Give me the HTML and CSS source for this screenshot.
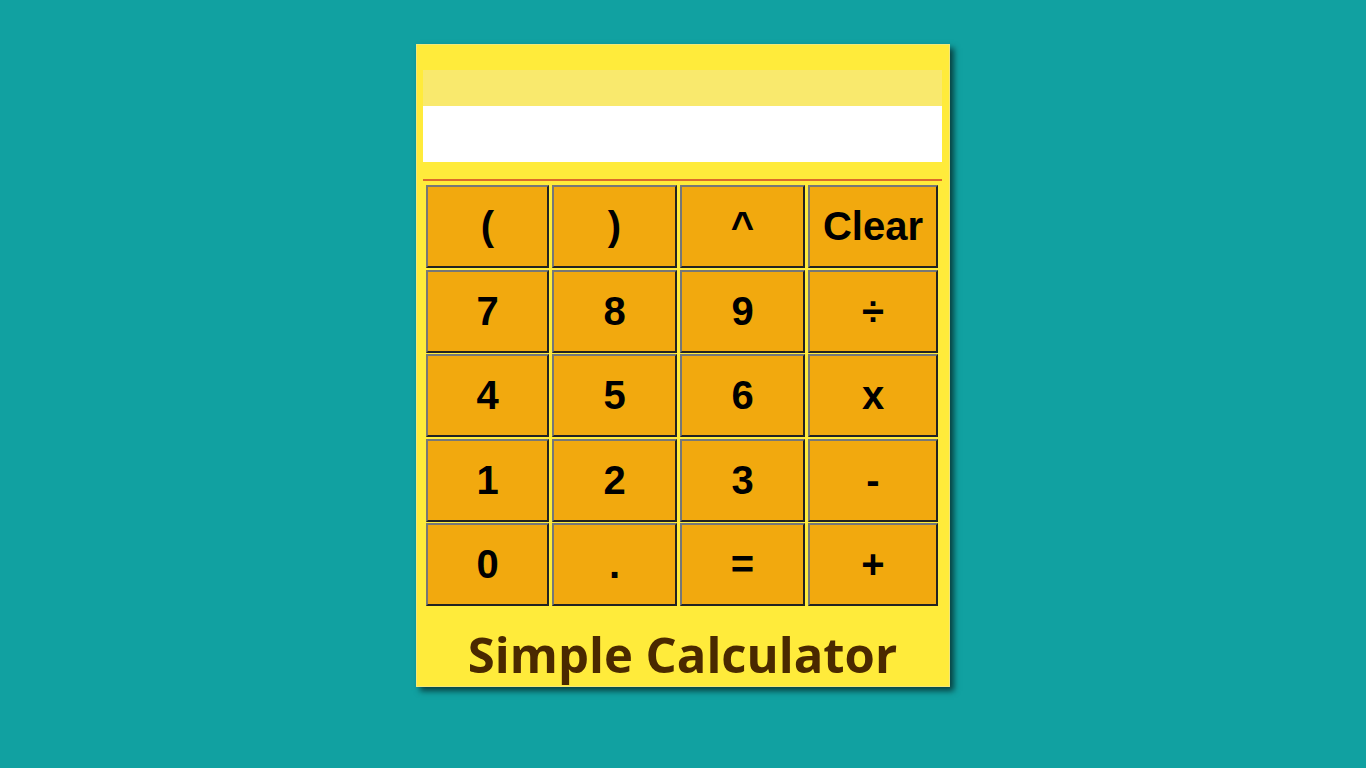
FILE: index.html
```html
<!DOCTYPE html>
<html lang="en">
<head>
<meta charset="utf-8">
<title>Simple Calculator</title>
<link rel="stylesheet" href="styles.css">
</head>
<body>
<div class="calc">
  <div class="display">
    <div class="expr"></div>
    <div class="result"></div>
  </div>
  <div class="divider"></div>
  <div class="keys">
    <button class="key">(</button>
    <button class="key">)</button>
    <button class="key">^</button>
    <button class="key">Clear</button>
    <button class="key">7</button>
    <button class="key">8</button>
    <button class="key">9</button>
    <button class="key">÷</button>
    <button class="key">4</button>
    <button class="key">5</button>
    <button class="key">6</button>
    <button class="key">x</button>
    <button class="key">1</button>
    <button class="key">2</button>
    <button class="key">3</button>
    <button class="key">-</button>
    <button class="key">0</button>
    <button class="key">.</button>
    <button class="key">=</button>
    <button class="key">+</button>
  </div>
  <div class="title">Simple Calculator</div>
</div>
</body>
</html>
```
FILE: styles.css
```css
html, body {
  margin: 0;
  padding: 0;
}
body {
  background: #11a1a1;
  height: 768px;
  overflow: hidden;
}
.calc {
  box-sizing: border-box;
  width: 534px;
  height: 643px;
  margin: 44px auto 0;
  background: #ffeb3b;
  border: 1px solid #f3e77a;
  box-shadow: 4px 4px 6px rgba(0, 0, 0, 0.6);
  padding: 25px 7px 0 6px;
  display: flex;
  flex-direction: column;
}
.display {
  display: flex;
  flex-direction: column;
}
.expr {
  height: 36px;
  background: #f9e96d;
}
.result {
  height: 56px;
  background: #ffffff;
}
.divider {
  margin-top: 17px;
  height: 2px;
  background: #dc6a2a;
}
.keys {
  margin: 4px 0 0 3px;
  display: grid;
  grid-template-columns: 123px 125px 125px 130px;
  grid-template-rows: repeat(5, 83px);
  column-gap: 3px;
  row-gap: 1.5px;
}
.key {
  box-sizing: border-box;
  margin: 0;
  padding: 0;
  background: #f2a90e;
  border: 2px solid;
  border-color: #777777 #222222 #222222 #777777;
  font-family: "Liberation Sans", Arial, sans-serif;
  font-weight: bold;
  font-size: 40px;
  color: #000;
  text-align: center;
}
.title {
  flex: 1;
  display: flex;
  align-items: center;
  justify-content: center;
  padding-top: 16px;
  font-family: "Open Sans", "Noto Sans", sans-serif;
  font-weight: bold;
  font-size: 49px;
  color: #4a2900;
  line-height: 1;
}
```
